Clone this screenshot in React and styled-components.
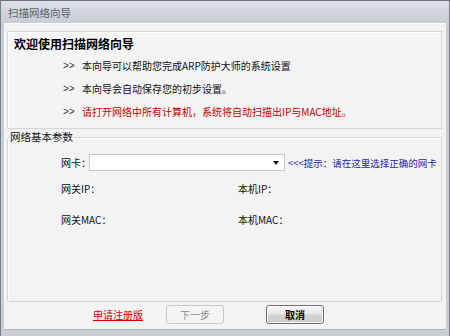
import React from "react";
import styled, { createGlobalStyle } from "styled-components";

const Global = createGlobalStyle`
  html, body { margin: 0; padding: 0; background: #f3f3f3; }
  body { font-family: "Noto Sans CJK SC", "Liberation Sans", sans-serif; }
  * { box-sizing: border-box; }
`;

const Window = styled.div`
  width: 450px;
  height: 336px;
  display: flex;
  flex-direction: column;
  background: #c9ced4;
  border-top: 1px solid #6b7078;
  border-left: 1px solid #7a7f86;
  border-right: 1px solid #7a7f86;
  overflow: hidden;
`;

const TitleBar = styled.div`
  height: 22px;
  flex: none;
  display: flex;
  align-items: center;
  padding-left: 7px;
  font-size: 10.5px;
  color: #5a5f66;
  background: linear-gradient(180deg, #dde2e8 0%, #cfd5dc 55%, #c6ccd3 100%);
`;

const Client = styled.div`
  flex: 1;
  display: flex;
  flex-direction: column;
  margin: 0 3px 6px 3px;
  padding: 7px 4px 0 3px;
  background: #f3f3f3;
  border-top: 1px solid #ffffff;
  border-bottom: 1px solid #aeb3b9;
`;

const WelcomePanel = styled.div`
  height: 98px;
  flex: none;
  border: 1px solid #d4d4d4;
  box-shadow: inset 1px 1px 0 #ffffff;
  background: #f4f4f4;
  padding: 4px 0 0 6px;
  display: flex;
  flex-direction: column;
`;

const Heading = styled.div`
  font-size: 12px;
  font-weight: bold;
  color: #000;
  line-height: 16px;
  margin-bottom: 2px;
`;

const InfoLine = styled.div`
  display: flex;
  align-items: center;
  height: 23px;
  padding-left: 49px;
  font-size: 10px;
  white-space: nowrap;
  color: ${(p) => (p.$warn ? "#c80000" : "#111")};
`;

const Arrows = styled.span`
  width: 19px;
  color: #333;
  flex: none;
  font-family: "Liberation Sans", sans-serif;
`;

const GroupBox = styled.fieldset`
  margin: 0;
  height: 173px;
  flex: none;
  border: 1px solid #d4d4d4;
  box-shadow: inset 1px 1px 0 #ffffff;
  border-radius: 2px;
  padding: 9px 0 0 53px;
`;

const Legend = styled.legend`
  font-size: 10.5px;
  color: #111;
  line-height: 16px;
  padding: 0 1px;
  margin-left: -52px;
`;

const CardRow = styled.div`
  display: flex;
  align-items: center;
  height: 17px;
  font-size: 10px;
  color: #111;
  white-space: nowrap;
`;

const Label = styled.span`
  flex: none;
  white-space: nowrap;
  width: ${(p) => p.$w || "auto"};
`;

const Combo = styled.div`
  width: 196px;
  height: 17px;
  flex: none;
  background: #fff;
  border: 1px solid #c5c7cb;
  display: flex;
  align-items: center;
  justify-content: flex-end;
  padding-right: 5px;
`;

const Caret = styled.span`
  width: 0;
  height: 0;
  border-left: 3px solid transparent;
  border-right: 3px solid transparent;
  border-top: 4px solid #111;
`;

const Hint = styled.span`
  margin-left: 3px;
  font-size: 9.5px;
  color: #2424b4;
  white-space: nowrap;
`;

const InfoGrid = styled.div`
  display: grid;
  grid-template-columns: 177px 1fr;
  grid-auto-rows: 31px;
  margin-top: 2px;
  font-size: 10px;
  color: #111;
  align-items: center;
`;

const Footer = styled.div`
  flex: 1;
  display: flex;
  align-items: center;
  padding-left: 86px;
  padding-bottom: 2px;
`;

const RegLink = styled.a`
  font-size: 10px;
  color: #d40000;
  text-decoration: underline;
  margin-right: 23px;
  cursor: pointer;
`;

const Button = styled.button`
  width: 58px;
  height: 19px;
  padding: 0;
  font-family: inherit;
  font-size: 10px;
  border-radius: 3px;
  margin-right: ${(p) => p.$mr || "0"};
  border: 1px solid ${(p) => (p.disabled ? "#c9c9c9" : "#6f6f6f")};
  color: ${(p) => (p.disabled ? "#8d8d8d" : "#000")};
  font-weight: ${(p) => (p.disabled ? "normal" : "bold")};
  background: ${(p) =>
    p.disabled
      ? "#f4f4f4"
      : "linear-gradient(180deg, #f6f6f6 0%, #e6e6e6 48%, #d4d4d4 52%, #cdcdcd 100%)"};
  box-shadow: ${(p) => (p.disabled ? "none" : "inset 0 0 0 1px #fafafa")};
`;

export default function App() {
  return (
    <>
      <Global />
      <Window>
        <TitleBar>扫描网络向导</TitleBar>
        <Client>
          <WelcomePanel>
            <Heading>欢迎使用扫描网络向导</Heading>
            <InfoLine>
              <Arrows>&gt;&gt;</Arrows>本向导可以帮助您完成ARP防护大师的系统设置
            </InfoLine>
            <InfoLine>
              <Arrows>&gt;&gt;</Arrows>本向导会自动保存您的初步设置。
            </InfoLine>
            <InfoLine $warn>
              <Arrows>&gt;&gt;</Arrows>请打开网络中所有计算机，系统将自动扫描出IP与MAC地址。
            </InfoLine>
          </WelcomePanel>
          <GroupBox>
            <Legend>网络基本参数</Legend>
            <CardRow>
              <Label $w="28px">网卡：</Label>
              <Combo>
                <Caret />
              </Combo>
              <Hint>&lt;&lt;&lt;提示：请在这里选择正确的网卡</Hint>
            </CardRow>
            <InfoGrid>
              <Label>网关IP：</Label>
              <Label>本机IP：</Label>
              <Label>网关MAC：</Label>
              <Label>本机MAC：</Label>
            </InfoGrid>
          </GroupBox>
          <Footer>
            <RegLink>申请注册版</RegLink>
            <Button disabled $mr="42px">下一步</Button>
            <Button>取消</Button>
          </Footer>
        </Client>
      </Window>
    </>
  );
}
